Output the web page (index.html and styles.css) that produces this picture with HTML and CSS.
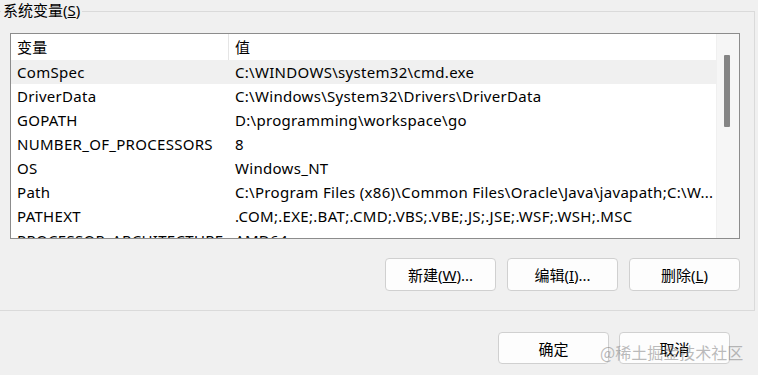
FILE: index.html
```html
<!DOCTYPE html>
<html lang="zh-CN">
<head>
    <meta charset="UTF-8">
    <title>系统变量</title>
    <link rel="stylesheet" href="styles.css">
</head>
<body>
    <fieldset class="group">
        <legend>系统变量(<u>S</u>)</legend>

        <div class="var-list">
            <div class="var-rows">
                <div class="row head">
                    <div class="col-name">变量</div>
                    <div class="col-value">值</div>
                </div>
                <div class="row selected">
                    <div class="col-name">ComSpec</div>
                    <div class="col-value">C:\WINDOWS\system32\cmd.exe</div>
                </div>
                <div class="row">
                    <div class="col-name">DriverData</div>
                    <div class="col-value">C:\Windows\System32\Drivers\DriverData</div>
                </div>
                <div class="row">
                    <div class="col-name">GOPATH</div>
                    <div class="col-value">D:\programming\workspace\go</div>
                </div>
                <div class="row">
                    <div class="col-name">NUMBER_OF_PROCESSORS</div>
                    <div class="col-value">8</div>
                </div>
                <div class="row">
                    <div class="col-name">OS</div>
                    <div class="col-value">Windows_NT</div>
                </div>
                <div class="row">
                    <div class="col-name">Path</div>
                    <div class="col-value">C:\Program Files (x86)\Common Files\Oracle\Java\javapath;C:\W...</div>
                </div>
                <div class="row">
                    <div class="col-name">PATHEXT</div>
                    <div class="col-value">.COM;.EXE;.BAT;.CMD;.VBS;.VBE;.JS;.JSE;.WSF;.WSH;.MSC</div>
                </div>
                <div class="row">
                    <div class="col-name">PROCESSOR_ARCHITECTURE</div>
                    <div class="col-value">AMD64</div>
                </div>
            </div>
            <div class="scrollbar">
                <div class="thumb"></div>
            </div>
        </div>

        <div class="group-actions">
            <button class="btn">新建(<u>W</u>)...</button>
            <button class="btn">编辑(<u>I</u>)...</button>
            <button class="btn">删除(<u>L</u>)</button>
        </div>
    </fieldset>

    <div class="dialog-actions">
        <button class="btn">确定</button>
        <button class="btn">取消</button>
    </div>

    <div class="watermark">@稀土掘金技术社区</div>
</body>
</html>
```

FILE: styles.css
```css
body {
    margin: 0;
    background-color: #f0f0f0;
    color: #000;
    font-family: "Segoe UI", "Noto Sans", "Noto Sans CJK SC", sans-serif;
    font-size: 15px;
    letter-spacing: 0.3px;
    width: 758px;
    height: 375px;
    overflow: hidden;
    position: relative;
}

/* group box, left edge runs off the window */
.group {
    margin: 0 3px 0 -20px;
    padding: 11px 14px 19px 29px;
    border: 1px solid #dadada;
}
.group legend {
    margin-left: -9px;
    padding: 0 2px;
    height: 22px;
    line-height: 20px;
    letter-spacing: 0;
}

.var-list {
    display: flex;
    height: 204px;
    border: 1px solid #8c8c8c;
    background-color: #fff;
}
.var-rows {
    flex: 1;
    overflow: hidden;
}
.row {
    display: flex;
    height: 24px;
    line-height: 24px;
    white-space: nowrap;
}
.row.head {
    height: 26px;
    line-height: 26px;
}
.row.selected {
    background-color: #f0f0f0;
}
.col-name {
    width: 211px;
    padding-left: 6px;
    overflow: hidden;
}
.col-value {
    flex: 1;
    padding-left: 7px;
    overflow: hidden;
}
.head .col-value {
    border-left: 1px solid #e5e5e5;
    padding-left: 6px;
}

.scrollbar {
    width: 22px;
    background-color: #f6f6f6;
    border-left: 1px solid #f0f0f0;
    padding-top: 21px;
}
.thumb {
    width: 6px;
    height: 72px;
    margin-left: 7px;
    background-color: #858585;
    border-radius: 1px;
}

.group-actions {
    display: flex;
    justify-content: flex-end;
    gap: 11px;
    margin-top: 19px;
}

.btn {
    width: 111px;
    height: 33px;
    background-color: #fdfdfd;
    border: 1px solid #d0d0d0;
    border-radius: 4px;
    font-family: inherit;
    font-size: 15px;
    color: #000;
    padding: 0;
}

.dialog-actions {
    display: flex;
    justify-content: flex-end;
    gap: 10px;
    margin: 21px 28px 0 0;
}
.dialog-actions .btn {
    height: 32px;
}

.watermark {
    position: absolute;
    left: 600px;
    top: 340px;
    font-size: 16px;
    line-height: 24px;
    letter-spacing: 0;
    color: rgba(120, 120, 120, 0.5);
    font-family: "Noto Sans CJK SC", sans-serif;
}
```
